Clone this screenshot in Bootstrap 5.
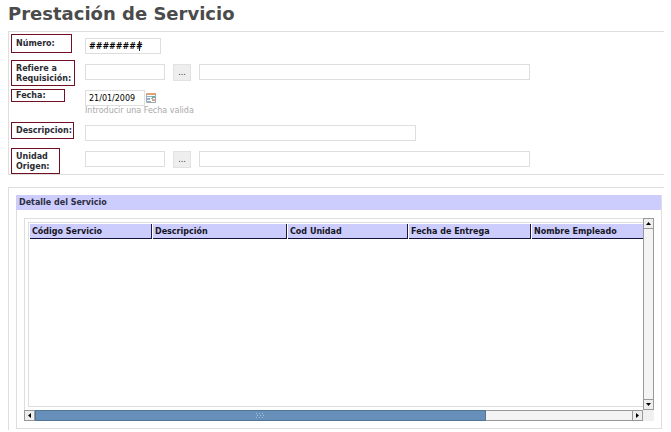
<!DOCTYPE html>
<html lang="es">
<head>
<meta charset="utf-8">
<meta name="viewport" content="width=device-width, initial-scale=1">
<title>Prestación de Servicio</title>
<link href="https://cdn.jsdelivr.net/npm/bootstrap@5.3.0/dist/css/bootstrap.min.css" rel="stylesheet">
<style>
body{font:8px/10px "DejaVu Sans",sans-serif;color:#222;background:#fff;padding:0 7px 2px 8px}
h1{font-size:18px;line-height:25px;font-weight:700;color:#4b4b4b;padding-top:1px;margin-bottom:5px}
.panel{border:1px solid #dedede;border-right:0}
.form-panel{padding:2px 0 0 2px;margin-bottom:12px}
.line{min-height:26px}
.line-tall{min-height:29px}
.line-date{min-height:33px}
.name-col{flex:0 0 74px}
.field{padding-top:4px}
.field-up{padding-top:3px}
.field-date{padding-top:1px}
.tag{display:block;border:1px solid #701025;padding:3px 0 1px 4px;font-weight:700;color:#2b2b33;white-space:nowrap}
.w-a{width:61px;padding:4px 0 3px 4px}.w-b{width:64px}.w-c{width:54px;padding:1px 0 0 4px}.w-d{width:63px;padding:3px 0 2px 4px}.w-e{width:49px}
.box{height:16px;border:1px solid #dedede;border-radius:0;padding:0 3px;font:8px/14px "DejaVu Sans",sans-serif;color:#000;background:#fff;min-width:0}
.box-key{width:76px}.box-code{width:80px}.box-date{width:60px}.box-long{width:331px}
.pick{width:18px;height:17px;padding:0;border:1px solid #e2e2e2;background:#eee;font-size:8px;line-height:14px;color:#333;margin:0 8px}
.caret{position:absolute;left:54px;top:3px;width:1px;height:10px;background:#222}
.cal{width:10px;height:10px;padding:0;border:0;background:none;margin:3px 0 0 1px;line-height:0}
.hint{color:#a9a9a9}
.detail-panel{border-bottom:0;padding:7px 2px 1px 7px}
.group-box{border:1px solid #dedede;border-top:0;padding-bottom:7px}
h2{font-size:8px;line-height:15px;font-weight:700;color:#2d2d40;background:#ccccfd;margin:0 0 8px -1px;padding-left:3px}
.scroller{margin:0 7px}
.view{border:1px solid #dedede;border-right:0;border-bottom:0;padding:3px 0 3px 3px;min-width:0}
.sheet{border:1px solid #dedede;border-right:0;min-height:185px;overflow:hidden;flex:1}
.items{width:746px;table-layout:fixed;border-collapse:separate;border-spacing:1px}
.items th{height:15px;background:#ccccfd;border-right:1px solid #1a1a40;border-bottom:1px solid #101038;padding:0 2px;font-weight:700;line-height:13px;color:#151522;white-space:nowrap}
.sb{width:11px;border:1px solid #999;border-width:0 1px;background:#f4f4f4}
.sb-btn{flex:none;width:11px;height:11px;border:1px solid #999;background:#eee;padding:0;line-height:0}
.sb .sb-btn{margin:0 -1px}
.hb{height:11px;border:1px solid #999;border-width:1px 0;background:#f4f4f4}
.hb .sb-btn{margin:-1px 0}
.thumb{width:75.6%;background:#6690ba;border:1px solid #537696;margin:-1px 0}
.corner{width:11px;background:#f0f0f0}
svg{display:block;margin:auto}
</style>
<script src="https://cdn.jsdelivr.net/npm/bootstrap@5.3.0/dist/js/bootstrap.bundle.min.js"></script>
</head>
<body>
<h1>Prestación de Servicio</h1>
<form class="panel form-panel">
  <div class="line d-flex">
    <div class="name-col"><label class="tag w-a" for="num">Número:</label></div>
    <div class="field"><div class="position-relative"><input class="box box-key fw-bold d-block" id="num" value="########"><span class="caret"></span></div></div>
  </div>
  <div class="line line-tall d-flex">
    <div class="name-col"><label class="tag w-b" for="req">Refiere a<br>Requisición:</label></div>
    <div class="field d-flex align-items-start"><input class="box box-code" id="req"><button type="button" class="pick" aria-label="Buscar requisición">...</button><input class="box box-long" aria-label="Nombre de la requisición"></div>
  </div>
  <div class="line line-date d-flex">
    <div class="name-col"><label class="tag w-c" for="fecha">Fecha:</label></div>
    <div class="field-date"><div class="d-flex align-items-start"><input class="box box-date" id="fecha" value="21/01/2009"><button type="button" class="cal" aria-label="Calendario"><svg width="10" height="10" viewBox="0 0 10 10"><path fill="#fff" stroke="#9aa9b5" d="M.5.5h9v9h-9z"/><path fill="#dda47c" d="M0 0h10v2H0z"/><path fill="#8fb1c9" d="M1 3h5v1H1zm0 2h3v2H1zm4 0h2v1H5zM1 8h4v1H1z"/><path fill="#6fae95" d="M6 3h3v2H6z"/><path fill="#dda47c" d="M6 6h3v2H6z"/></svg></button></div>
    <div class="hint">Introducir una Fecha valida</div></div>
  </div>
  <div class="line d-flex">
    <div class="name-col"><label class="tag w-d" for="desc">Descripcion:</label></div>
    <div class="field-up"><input class="box box-long d-block" id="desc"></div>
  </div>
  <div class="line d-flex">
    <div class="name-col"><label class="tag w-e" for="uni">Unidad<br>Origen:</label></div>
    <div class="field-up d-flex align-items-start"><input class="box box-code" id="uni"><button type="button" class="pick" aria-label="Buscar unidad">...</button><input class="box box-long" aria-label="Nombre de la unidad"></div>
  </div>
</form>
<section class="panel detail-panel">
  <div class="group-box">
    <h2>Detalle del Servicio</h2>
    <div class="scroller">
      <div class="d-flex">
        <div class="view d-flex flex-fill"><div class="sheet">
          <table class="items">
            <colgroup><col style="width:122px"><col style="width:134px"><col style="width:120px"><col style="width:122px"><col></colgroup>
            <thead><tr><th>Código Servicio</th><th>Descripción</th><th>Cod Unidad</th><th>Fecha de Entrega</th><th>Nombre Empleado</th></tr></thead>
          </table>
        </div></div>
        <div class="sb d-flex flex-column justify-content-between">
          <button type="button" class="sb-btn" aria-label="Subir"><svg width="5" height="3"><path d="M0 3 2.500 0 5 3z"/></svg></button>
          <button type="button" class="sb-btn" aria-label="Bajar"><svg width="5" height="3"><path d="M0 0 2.500 3 5 0z"/></svg></button>
        </div>
      </div>
      <div class="d-flex">
        <div class="hb d-flex flex-fill">
          <button type="button" class="sb-btn" aria-label="Izquierda"><svg width="3" height="5"><path d="M3 0 0 2.500 3 5z"/></svg></button>
          <div class="flex-fill d-flex"><div class="thumb d-flex align-items-center"><svg width="9" height="5" fill="#a5c2de"><path d="M0 0h1v1H0zm3 0h1v1H3zm3 0h1v1H6zM1 2h1v1H1zm3 0h1v1H4zm3 0h1v1H7zM0 4h1v1H0zm3 0h1v1H3zm3 0h1v1H6z"/></svg></div></div>
          <button type="button" class="sb-btn" aria-label="Derecha"><svg width="3" height="5"><path d="M0 0 3 2.500 0 5z"/></svg></button>
        </div>
        <div class="corner"></div>
      </div>
    </div>
  </div>
</section>
</body>
</html>
